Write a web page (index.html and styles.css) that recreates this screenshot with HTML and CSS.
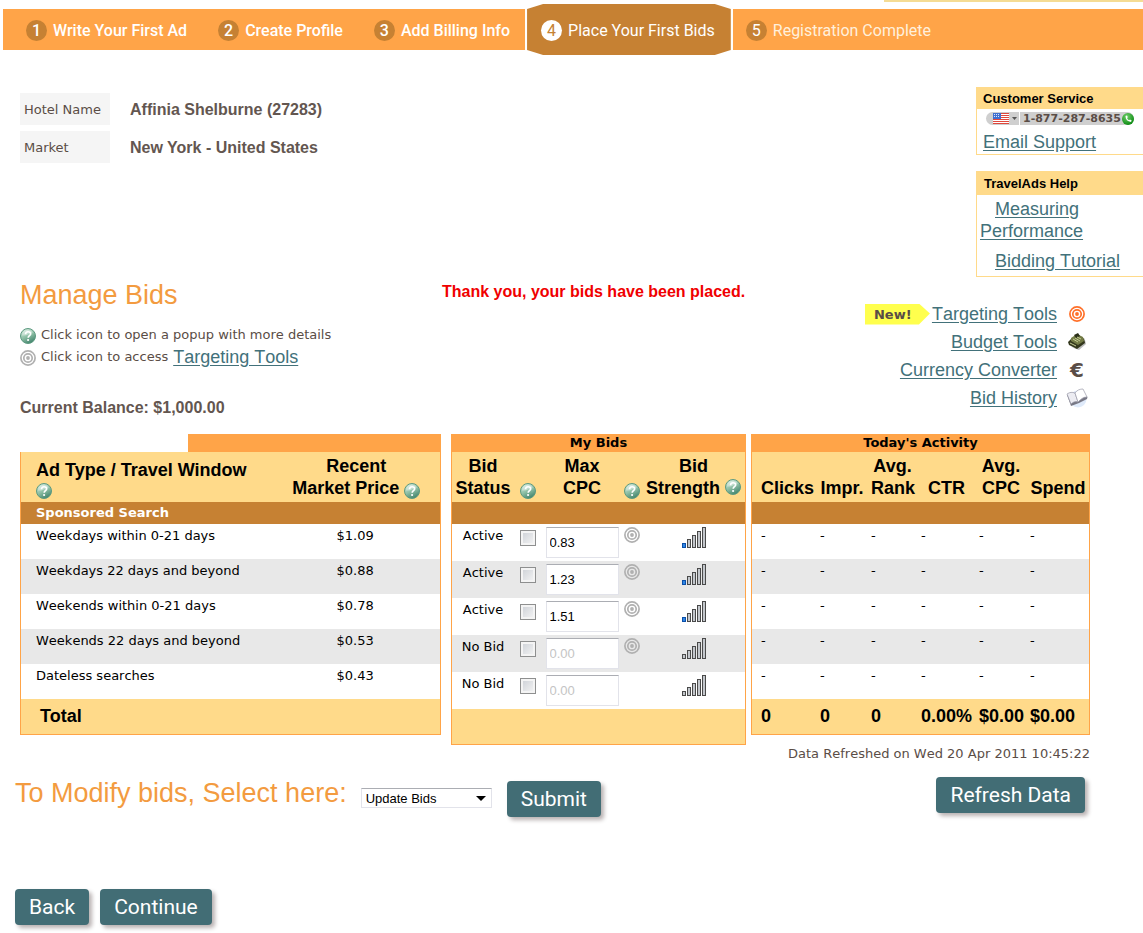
FILE: index.html
```html
<!DOCTYPE html>
<html lang="en">
<head>
<meta charset="utf-8">
<title>Manage Bids</title>
<link rel="stylesheet" href="styles.css">
</head>
<body>
<svg class="defs" aria-hidden="true">
  <defs>
    <linearGradient id="ball" x1="0.2" y1="0" x2="0.7" y2="1">
      <stop offset="0" stop-color="#d6ece0"/>
      <stop offset="0.5" stop-color="#8fc0a6"/>
      <stop offset="1" stop-color="#3d8069"/>
    </linearGradient>
    <radialGradient id="call" cx="0.4" cy="0.3" r="0.7">
      <stop offset="0" stop-color="#6fd06a"/>
      <stop offset="1" stop-color="#0c8a12"/>
    </radialGradient>
    <symbol id="help" viewBox="0 0 16 16">
      <circle cx="8" cy="8" r="7.5" fill="url(#ball)" stroke="#5d9a80"/>
      <path d="M2 7.500a6 6 0 0 1 11-3c-3 0-4 3.500-11 3z" fill="#fff" opacity=".35"/>
      <path d="M5.500 6.200c0-3.200 5.200-3.200 5.200-.4 0 1.900-2.500 1.900-2.500 4" fill="none" stroke="#fff" stroke-width="1.700"/>
      <circle cx="8.100" cy="12" r="1.100" fill="#fff"/>
    </symbol>
    <symbol id="target" viewBox="0 0 16 16">
      <g fill="none" stroke="currentColor" stroke-width="1.700">
        <circle cx="8" cy="8" r="7.100"/>
        <circle cx="8" cy="8" r="4.200"/>
      </g>
      <circle cx="8" cy="8" r="1.900" fill="currentColor"/>
    </symbol>
    <symbol id="bars" viewBox="0 0 24 21">
      <g fill="#c3c7cc" stroke="#4a4a4a">
        <rect x=".5" y="16.500" width="3" height="4"/>
        <rect x="5.500" y="12.500" width="3" height="8"/>
        <rect x="10.500" y="8.500" width="3" height="12"/>
        <rect x="15.500" y="4.500" width="3" height="16"/>
        <rect x="20.500" y=".5" width="3" height="20"/>
      </g>
    </symbol>
    <symbol id="bars-low" viewBox="0 0 24 21">
      <use href="#bars"/>
      <rect x=".5" y="16.500" width="3" height="4" fill="#2f86e6" stroke="#0b4fa8"/>
    </symbol>
  </defs>
</svg>

<div class="top-strip"></div>
<nav class="steps" aria-label="Registration steps">
  <div class="steps-done">
    <span class="step"><span class="num">1</span>Write Your First Ad</span>
    <span class="step"><span class="num">2</span>Create Profile</span>
    <span class="step"><span class="num">3</span>Add Billing Info</span>
  </div>
  <div class="steps-current" aria-current="step">
    <span class="step"><span class="num">4</span>Place Your First Bids</span>
  </div>
  <div class="steps-next">
    <span class="step"><span class="num">5</span>Registration Complete</span>
  </div>
</nav>

<header class="account">
  <dl class="hotel">
    <dt>Hotel Name</dt><dd>Affinia Shelburne (27283)</dd>
    <dt>Market</dt><dd>New York - United States</dd>
  </dl>
  <aside class="side">
    <section class="box">
      <h2>Customer Service</h2>
      <div class="box-body service">
        <div class="phone">
          <span class="flag">
            <svg width="16" height="11" viewBox="0 0 16 11" aria-hidden="true">
              <rect width="16" height="11" fill="#fff"/>
              <path d="M0 .5h16M0 2.500h16M0 4.500h16M0 6.500h16M0 8.500h16M0 10.500h16" stroke="#e0473c"/>
              <rect width="8" height="6" fill="#3f6fd0"/>
              <path d="M1 1.500h6M1 3.500h6" stroke="#dce6fb" stroke-dasharray="1 1"/>
            </svg>
            <svg width="5" height="3" viewBox="0 0 5 3" aria-hidden="true"><path d="M0 0h5L2.500 3z" fill="#555"/></svg>
          </span>
          <span class="phone-no">1-877-287-8635
            <svg width="12" height="12" viewBox="0 0 12 12" aria-hidden="true">
              <circle cx="6" cy="6" r="6" fill="url(#call)"/>
              <path d="M3.500 3c0 3.500 2 5.500 5.500 6l.7-1.500-1.700-1-1 .7C6 6.700 5.300 6 5 5l.8-.8L5 2.500z" fill="#fff"/>
            </svg>
          </span>
        </div>
        <a href="#">Email Support</a>
      </div>
    </section>
    <section class="box">
      <h2 class="tall">TravelAds Help</h2>
      <div class="box-body help-links">
        <p><a href="#">Measuring Performance</a></p>
        <p><a href="#">Bidding Tutorial</a></p>
      </div>
    </section>
  </aside>
</header>

<main>
  <section class="intro">
    <div class="intro-text">
      <h1>Manage Bids</h1>
      <p class="hint"><svg class="icon"><use href="#help"/></svg>Click icon to open a popup with more details</p>
      <p class="hint"><svg class="icon grey"><use href="#target"/></svg>Click icon to access <a href="#">Targeting Tools</a></p>
      <p class="balance">Current Balance: $1,000.00</p>
    </div>
    <p class="notice">Thank you, your bids have been placed.</p>
    <ul class="tools">
      <li><span class="new">New!</span><a href="#">Targeting Tools</a><span class="tool-icon"><svg class="icon orange"><use href="#target"/></svg></span></li>
      <li><a href="#">Budget Tools</a><span class="tool-icon">
        <svg width="20" height="20" viewBox="0 0 20 20" aria-hidden="true">
          <path d="M4 15l8 3 7-6-1-4-9 8z" fill="#555" opacity=".4"/>
          <path d="M1 10l3-3 7 4 6-5 1 5-8 6-8-4z" fill="#33371c"/>
          <path d="M4 6l6-4 6 3 1 4-6 4-7-4z" fill="#737b45"/>
          <path d="M7 3l4-2 2 3-4 2z" fill="#2b2f18"/>
          <path d="M6 7l5 3M8 6l5 3M10 5l4 2M3 11l6 3" stroke="#c4cc93" stroke-width="1"/>
        </svg></span></li>
      <li><a href="#">Currency Converter</a><span class="tool-icon euro">€</span></li>
      <li><a href="#">Bid History</a><span class="tool-icon">
        <svg width="22" height="20" viewBox="0 0 22 20" aria-hidden="true">
          <circle cx="12" cy="11" r="8.500" fill="#dfeafa"/>
          <path d="M1 7l4 11 8-3 8-4 .5-2-2-1-14 7-3-8z" fill="#777784"/>
          <path d="M1 6c3-2 5-2 8-1l3 9c-3-1-5 0-7 2z" fill="#ececf2" stroke="#9a9aa8" stroke-width=".7"/>
          <path d="M9 5c2-3 5-4 8-4l4 8c-4 0-6 2-9 5z" fill="#fff" stroke="#9a9aa8" stroke-width=".7"/>
        </svg></span></li>
    </ul>
  </section>

  <div class="grids">
    <table class="grid prices">
      <caption>&nbsp;</caption>
      <thead>
        <tr><th scope="col">Ad Type / Travel Window<br><svg class="icon"><use href="#help"/></svg></th><th scope="col">Recent<br>Market Price <svg class="icon"><use href="#help"/></svg></th></tr>
      </thead>
      <tbody>
        <tr class="group"><th colspan="2" scope="rowgroup">Sponsored Search</th></tr>
        <tr><td>Weekdays within 0-21 days</td><td>$1.09</td></tr>
        <tr><td>Weekdays 22 days and beyond</td><td>$0.88</td></tr>
        <tr><td>Weekends within 0-21 days</td><td>$0.78</td></tr>
        <tr><td>Weekends 22 days and beyond</td><td>$0.53</td></tr>
        <tr><td>Dateless searches</td><td>$0.43</td></tr>
      </tbody>
      <tfoot><tr><td>Total</td><td></td></tr></tfoot>
    </table>

    <table class="grid bids">
      <caption>My Bids</caption>
      <colgroup><col class="c-status"><col class="c-check"><col class="c-cpc"><col class="c-target"><col></colgroup>
      <thead>
        <tr><th scope="col">Bid<br>Status</th><th class="mark"><svg class="icon"><use href="#help"/></svg></th><th scope="col">Max<br>CPC</th><th class="mark"><svg class="icon"><use href="#help"/></svg></th><th scope="col" class="strength">Bid<br>Strength <svg class="icon"><use href="#help"/></svg></th></tr>
      </thead>
      <tbody>
        <tr class="group"><th colspan="5"></th></tr>
        <tr><td>Active</td><td><input type="checkbox" aria-label="Select bid 1"></td><td><input type="text" value="0.83" aria-label="Max CPC 1"></td><td><svg class="icon grey"><use href="#target"/></svg></td><td><svg class="bars"><use href="#bars-low"/></svg></td></tr>
        <tr><td>Active</td><td><input type="checkbox" aria-label="Select bid 2"></td><td><input type="text" value="1.23" aria-label="Max CPC 2"></td><td><svg class="icon grey"><use href="#target"/></svg></td><td><svg class="bars"><use href="#bars-low"/></svg></td></tr>
        <tr><td>Active</td><td><input type="checkbox" aria-label="Select bid 3"></td><td><input type="text" value="1.51" aria-label="Max CPC 3"></td><td><svg class="icon grey"><use href="#target"/></svg></td><td><svg class="bars"><use href="#bars-low"/></svg></td></tr>
        <tr><td>No Bid</td><td><input type="checkbox" aria-label="Select bid 4"></td><td><input type="text" value="0.00" disabled aria-label="Max CPC 4"></td><td><svg class="icon grey"><use href="#target"/></svg></td><td><svg class="bars"><use href="#bars"/></svg></td></tr>
        <tr><td>No Bid</td><td><input type="checkbox" aria-label="Select bid 5"></td><td><input type="text" value="0.00" disabled aria-label="Max CPC 5"></td><td></td><td><svg class="bars"><use href="#bars"/></svg></td></tr>
      </tbody>
      <tfoot><tr><td colspan="5"></td></tr></tfoot>
    </table>

    <div class="activity-col">
      <table class="grid activity">
        <caption>Today's Activity</caption>
        <colgroup><col class="c-clicks"><col class="c-impr"><col class="c-rank"><col class="c-ctr"><col class="c-avg"><col></colgroup>
        <thead>
          <tr><th scope="col">Clicks</th><th scope="col">Impr.</th><th scope="col">Avg. Rank</th><th scope="col">CTR</th><th scope="col">Avg. CPC</th><th scope="col">Spend</th></tr>
        </thead>
        <tbody>
          <tr class="group"><th colspan="6"></th></tr>
          <tr><td>-</td><td>-</td><td>-</td><td>-</td><td>-</td><td>-</td></tr>
          <tr><td>-</td><td>-</td><td>-</td><td>-</td><td>-</td><td>-</td></tr>
          <tr><td>-</td><td>-</td><td>-</td><td>-</td><td>-</td><td>-</td></tr>
          <tr><td>-</td><td>-</td><td>-</td><td>-</td><td>-</td><td>-</td></tr>
          <tr><td>-</td><td>-</td><td>-</td><td>-</td><td>-</td><td>-</td></tr>
        </tbody>
        <tfoot><tr><td>0</td><td>0</td><td>0</td><td>0.00%</td><td>$0.00</td><td>$0.00</td></tr></tfoot>
      </table>
      <p class="refreshed">Data Refreshed on Wed 20 Apr 2011 10:45:22</p>
    </div>
  </div>

  <form class="actions">
    <label for="action">To Modify bids, Select here:</label>
    <span class="select">
      <select id="action"><option>Update Bids</option></select>
      <svg width="10" height="5" viewBox="0 0 10 5" aria-hidden="true"><path d="M0 0h10L5 5z"/></svg>
    </span>
    <button class="btn" type="button">Submit</button>
    <button class="btn refresh" type="button">Refresh Data</button>
  </form>

  <div class="pager">
    <button class="btn" type="button">Back</button>
    <button class="btn" type="button">Continue</button>
  </div>
</main>
</body>
</html>
```
FILE: styles.css
```css
* { box-sizing: border-box; }

body {
  margin: 0;
  background: #fff;
  color: #5a4d46;
  font-family: "DejaVu Sans", Verdana, sans-serif;
  font-size: 13px;
  line-height: 16px;
}

p, h1, h2, dl, dd, ul { margin: 0; padding: 0; }
a { color: #42717a; font: 18px/22px "Liberation Sans", Arial, sans-serif; text-underline-offset: 2px; }
a, h1, h2, p, dd, th, td, label { font-kerning: none; }
.defs { position: absolute; width: 0; height: 0; }
.icon { width: 16px; height: 16px; }
.grey { color: #b0b0b0; }
.orange { color: #ff7029; }

/* Step bar */
.top-strip { height: 2px; width: 259px; margin: 0 0 2px auto; background: #f5dc94; }
.steps {
  display: flex;
  align-items: center;
  gap: 2px;
  padding-left: 3px;
  color: #fff;
  font: 500 16px/21px Roboto, sans-serif;
}
.steps-done, .steps-next { display: flex; align-items: center; height: 41px; padding-top: 2px; background: #ffa448; }
.steps-done { gap: 31px; padding-right: 15px; padding-left: 23px; }
.steps-current {
  display: flex;
  align-items: center;
  height: 51px;
  padding: 2px 16px 0 14px;
  background: #c68133;
  clip-path: polygon(0 5px, 16px 0, calc(100% - 16px) 0, 100% 5px, 100% calc(100% - 5px), calc(100% - 16px) 100%, 16px 100%, 0 calc(100% - 5px));
}
.steps-next { flex: 1; padding-left: 13px; color: #fff0dc; }
.steps-current, .steps-next { font-weight: 400; }
.step { display: flex; align-items: center; gap: 6px; white-space: nowrap; }
.num { width: 21px; height: 21px; border-radius: 50%; background: #c68133; color: #fff; text-align: center; }
.steps-current .num { background: #fff; color: #c68133; }

/* Account header */
.account { display: flex; justify-content: space-between; align-items: flex-start; padding-top: 32px; }
.hotel { display: grid; grid-template-columns: 90px auto; gap: 6px 20px; padding: 6px 0 0 20px; }
.hotel dt { padding: 9px 4px 7px; background: #f5f5f5; }
.hotel dd { padding: 9px 0 7px; font: bold 16px/16px "Liberation Sans", Arial, sans-serif; color: #635650; }
.side { display: grid; gap: 16px; width: 167px; }
.box { border: 1px solid #ffda8a; border-right: 0; }
.box h2 { padding: 3px 6px 2px; background: #ffda8a; color: #000; font: bold 13px/16px "Liberation Sans", Arial, sans-serif; }
.box .tall { padding: 4px 7px 3px; }
.box-body { padding: 3px 3px 0; }
.service { padding: 3px 6px 1px; }
.phone { display: flex; gap: 1px; margin: 0 0 6px 3px; font: bold 11px/13px "DejaVu Sans", Verdana, sans-serif; white-space: nowrap; }
.flag { display: flex; align-items: center; gap: 3px; padding: 0 2px 0 7px; border-radius: 7px 0 0 7px; background: #cfcfcf; }
.phone-no { display: flex; align-items: center; gap: 1px; padding-left: 3px; border-radius: 0 7px 7px 0; background: #cfcfcf; }
.help-links p { text-indent: 15px; padding-bottom: 4px; }
.help-links p + p { padding: 4px 0; }

/* Intro */
.intro { display: flex; align-items: flex-start; padding: 2px 55px 0 20px; }
.intro-text { width: 422px; }
.intro h1 { margin-bottom: 13px; }
.intro h1, .actions label { color: #f39b40; font: 27px/32px "Liberation Sans", Arial, sans-serif; }
.hint { display: flex; align-items: center; gap: 5px; height: 22px; }
.hint .icon { margin-top: 2px; }
.balance { margin-top: 30px; }
.balance, .notice { font: bold 16px/20px "Liberation Sans", Arial, sans-serif; }
.balance { color: #635650; }
.notice { flex: 1; padding-top: 3px; color: #f00000; }
.tools { list-style: none; padding-top: 21px; }
.tools li { display: flex; justify-content: flex-end; align-items: center; height: 28px; }
.tool-icon { display: flex; justify-content: center; width: 22px; margin-left: 9px; }
.euro { font-size: 20px; font-weight: bold; }
.new { width: 65px; padding: 3px 9px 2px; margin-right: 2px; background: #ffff4d; clip-path: polygon(0 0, 54px 0, 65px 10px, 54px 21px, 0 21px); font-weight: bold; }

/* Data grids */
.grids { display: grid; grid-template-columns: 421fr 295fr 334fr; align-items: start; column-gap: 10px; padding: 16px 53px 0 20px; }
.activity-col { margin-left: -5px; }
.grid { width: 100%; table-layout: fixed; border-collapse: separate; border-spacing: 0; border: 1px solid #ffa448; border-top: 0; color: #000; }
.grid caption { height: 18px; background: #ffa448; font-weight: bold; line-height: 18px; }
.prices caption { margin-left: 168px; }
.grid th, .grid td { padding: 0; vertical-align: top; }
.grid thead th { height: 50px; padding: 3px 0; background: #ffda8a; font: bold 18px/22px "Liberation Sans", Arial, sans-serif; vertical-align: bottom; }
.grid .group th { height: 22px; background: #c68133; color: #fff; text-align: left; line-height: 22px; }
.grid tbody td { height: 35px; padding-top: 4px; }
.grid tbody tr:nth-child(odd) td { background: #e8e8e8; }
.grid tfoot td { height: 35px; background: #ffda8a; font: bold 18px/35px "Liberation Sans", Arial, sans-serif; }
.grid thead .icon { vertical-align: -5px; }

.grid.prices th:first-child, .grid.prices td:first-child { padding-left: 15px; }
.grid.prices tfoot td:first-child { padding-left: 19px; }
.prices thead th:first-child { width: 60%; text-align: left; line-height: 18px; }
.prices td:last-child { padding-right: 2px; text-align: center; }

.c-status { width: 62px; }
.c-check { width: 28px; }
.c-cpc { width: 80px; }
.c-target { width: 20px; }
.bids td { text-align: center; }
.bids tbody td { height: 37px; }
.bids svg, .bids input { display: block; margin: 0 auto; }
.bids .strength svg { display: inline; vertical-align: -1px; }
.grid.bids tbody td:nth-child(3), .grid.bids tbody td:nth-child(4), .grid.bids tbody td:nth-child(5) { padding-top: 3px; }
.grid.bids tbody td:nth-child(2) { padding-top: 6px; }
.bars { width: 24px; height: 21px; }
input[type="text"] { width: 73px; height: 31px; padding: 0 3px; border: 1px solid #e2e3ea; border-top-color: #abadb3; background: #fff; color: #000; font: 13px "Liberation Sans", Arial, sans-serif; }
input[type="text"]:disabled { color: #c4c4c4; }
input[type="checkbox"] { appearance: none; width: 16px; height: 16px; border: 1px solid #8e8f8f; background: linear-gradient(135deg, #cbcfd5, #f6f6f6); box-shadow: inset 0 0 0 2px #f4f4f4; }

.c-clicks { width: 68px; }
.c-impr { width: 51px; }
.c-rank { width: 50px; }
.c-ctr { width: 58px; }
.c-avg { width: 51px; }
.grid.activity thead th { padding-right: 7px; }
.grid.activity thead th:last-child { padding-right: 3px; }
.grid.activity th:first-child, .grid.activity td:first-child { padding-left: 9px; }
.refreshed { margin-top: 11px; text-align: right; white-space: nowrap; }

/* Actions */
.actions { display: flex; align-items: flex-start; padding: 15px 58px 0 15px; }
.actions label { margin-right: 14px; }
.select { position: relative; margin: 11px 15px 0 0; }
.select select { display: block; appearance: none; width: 131px; height: 20px; padding: 0 4px; border: 1px solid #e2e3ea; border-top-color: #abadb3; border-radius: 0; background: #fff; color: #000; font: 13px "Liberation Sans", Arial, sans-serif; }
.select svg { position: absolute; right: 6px; top: 8px; pointer-events: none; }
.btn { height: 36px; padding: 0 14px; border: 0; border-radius: 4px; background: #426d75; box-shadow: 3px 3px 4px #b9b2b2; color: #fff; font: 21px Roboto, sans-serif; white-space: nowrap; }
.actions .btn { margin-top: 4px; }
.actions .refresh { margin: 0 0 0 auto; }
.pager { display: flex; gap: 11px; padding: 72px 15px 8px; }
```
